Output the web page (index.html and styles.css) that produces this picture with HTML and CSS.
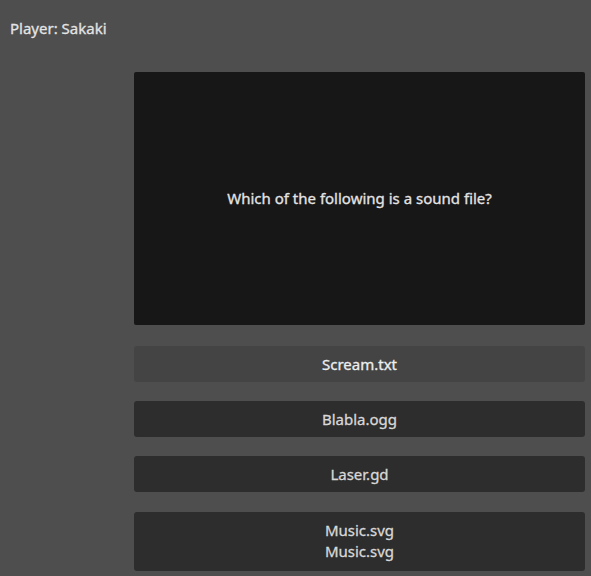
FILE: index.html
```html
<!DOCTYPE html>
<html>
<head>
<meta charset="utf-8">
<link rel="stylesheet" href="styles.css">
</head>
<body>
<div class="app">
  <div class="player">Player: Sakaki</div>
  <div class="main">
    <div class="question">Which of the following is a sound file?</div>
    <div class="answers">
      <div class="btn hover">Scream.txt</div>
      <div class="btn">Blabla.ogg</div>
      <div class="btn">Laser.gd</div>
      <div class="btn multi">Music.svg<br>Music.svg</div>
    </div>
  </div>
</div>
</body>
</html>
```
FILE: styles.css
```css
html, body {
  margin: 0;
  padding: 0;
  background: #4e4e4e;
}
body {
  width: 591px;
  height: 576px;
  overflow: hidden;
  font-family: "Noto Sans", "Open Sans", sans-serif;
  font-size: 15px;
  color: #e4e4e4;
  -webkit-text-stroke: 0.3px currentColor;
}
.app {
  display: flex;
  flex-direction: column;
}
.player {
  padding: 18px 0 0 10px;
  height: 72px;
  box-sizing: border-box;
  line-height: 20px;
}
.main {
  margin-left: 134px;
  margin-right: 6px;
  display: flex;
  flex-direction: column;
}
.question {
  height: 253px;
  background: #171717;
  border-radius: 2px;
  display: flex;
  align-items: center;
  justify-content: center;
  box-sizing: border-box;
  padding-bottom: 2px;
}
.answers {
  margin-top: 21px;
  display: flex;
  flex-direction: column;
  gap: 19px;
}
.btn {
  min-height: 36px;
  background: #2d2d2d;
  border-radius: 3px;
  display: flex;
  align-items: center;
  justify-content: center;
  text-align: center;
  line-height: 20px;
  box-sizing: border-box;
  color: #d8d8d8;
}
.btn.hover {
  background: #444444;
  color: #eeeeee;
}
.btn.multi {
  height: 59px;
  margin-top: 1px;
  padding-bottom: 2px;
  line-height: 21px;
}
```
